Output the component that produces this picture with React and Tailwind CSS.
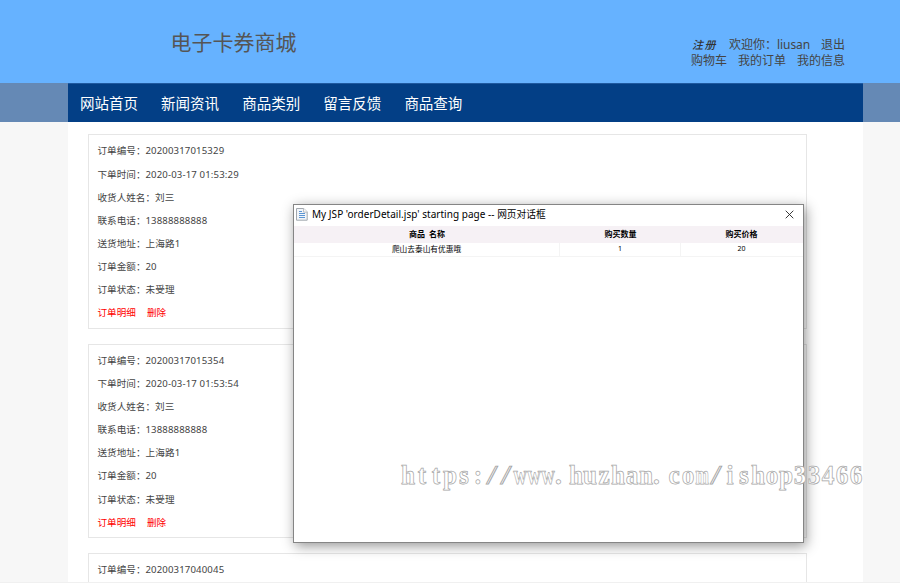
import React from "react";

const NAV = ["网站首页", "新闻资讯", "商品类别", "留言反馈", "商品查询"];

const ORDERS = [
  { id: "20200317015329", time: "2020-03-17 01:53:29" },
  { id: "20200317015354", time: "2020-03-17 01:53:54" },
];

function Row({ label, children }) {
  return (
    <div className="h-[23.15px] whitespace-nowrap leading-[23.15px]">
      {label}：<span className="tracking-[0.14px]">{children}</span>
    </div>
  );
}

function Order({ order }) {
  return (
    <section className="mb-[15px] h-[194.4px] w-[719px] shrink-0 border border-[#e6e6e6] pl-[8.5px] pt-[4px] text-[9.6px] text-[#444]">
      <Row label="订单编号">{order.id}</Row>
      <Row label="下单时间">{order.time}</Row>
      <Row label="收货人姓名">刘三</Row>
      <Row label="联系电话">13888888888</Row>
      <Row label="送货地址">上海路1</Row>
      <Row label="订单金额">20</Row>
      <Row label="订单状态">未受理</Row>
      <div className="flex h-[23.15px] gap-[11px] leading-[23.15px] text-[#ff0000]">
        <a>订单明细</a>
        <a>删除</a>
      </div>
    </section>
  );
}

function Dialog() {
  return (
    <div className="absolute left-[293px] top-[204px] h-[339px] w-[510.5px] border border-[#858585] bg-white text-black shadow-[2px_3px_12px_rgba(0,0,0,0.42)]">
      <div className="flex h-[20.5px] items-center pb-[2px] pl-[2px] pr-[9px]">
        <svg width="12" height="14" viewBox="0 0 12 14" className="shrink-0">
          <path d="M.5 1.5h7.3l3.4 3.4v8.3H.5z" fill="#f1f5fa" stroke="#a3a8ae" />
          <path d="M7.6 1.5v3.6h3.6" fill="#fff" stroke="#b5b9be" />
          <path d="M3 4.5h3M3 6.5h6M3 8.5h6M3 10.5h6" stroke="#5b95d2" />
        </svg>
        <span className="ml-1 whitespace-nowrap text-[10px] leading-[18px] tracking-[0.03px]">
          My JSP 'orderDetail.jsp' starting page -- <span className="text-[9.7px] tracking-normal">网页对话框</span>
        </span>
        <svg width="9" height="9" viewBox="0 0 9 9" className="ml-auto shrink-0">
          <path d="M.7.7l7.6 7.6M8.3.7L.7 8.3" stroke="#222" strokeWidth="0.9" />
        </svg>
      </div>
      <div className="grid h-[17.5px] grid-cols-[266px_121px_121px] items-center bg-[#f6f1f5] text-center text-[8px] font-bold leading-[15px]">
        <div className="pb-[2px]">商品&nbsp; 名称</div>
        <div className="pb-[2px]">购买数量</div>
        <div className="pb-[2px]">购买价格</div>
      </div>
      <div className="grid h-[14px] grid-cols-[266px_121px_121px] border-b border-[#f4f4f4] text-center text-[7.7px] leading-[12px]">
        <div className="border-r border-[#f4f4f4]">爬山去泰山有优惠哦</div>
        <div className="border-r border-[#f4f4f4] text-[7px]">1</div>
        <div className="text-[7px]">20</div>
      </div>
    </div>
  );
}

function glyphShape(c) {
  if (c === "w") return " justify-center scale-x-[0.68]";
  if (c === "m") return " justify-center scale-x-[0.6]";
  if (c === "/") return " justify-center scale-x-[1.5] font-normal";
  if (c === ".") return " justify-start";
  return " justify-center scale-x-[0.92]";
}

function Watermark() {
  return (
    <div className="absolute left-[401px] top-[459px] flex h-[32px] font-['Liberation_Serif',serif] text-[27.5px] font-bold leading-[32px] text-white [-webkit-text-stroke:0.75px_#a6a6a6]">
      {"https://www.huzhan.com/ishop33466".split("").map((c, i) => (
        <span key={i} className={"flex w-[14px] shrink-0" + glyphShape(c)}>
          {c}
        </span>
      ))}
    </div>
  );
}

export default function App() {
  return (
    <div className="relative h-[585px] w-[900px] overflow-hidden bg-white font-['Noto_Sans','Noto_Sans_CJK_SC',sans-serif] text-[#444]">
      <div className="flex h-[583px] flex-col overflow-hidden border-b border-[#f0f0f0] bg-[#f7f7f7]">
        <header className="flex h-[83px] shrink-0 justify-between bg-[#66b2ff] pl-[170.5px] pr-[55px]">
          <h1 className="mt-[26px] text-[21px] leading-[32px] text-[#555]">电子卡券商城</h1>
          <div className="mt-[37px] text-[12px] leading-[15.5px]">
            <div className="flex justify-end whitespace-nowrap">
              <a className="mr-[12px] text-[11px] font-medium italic tracking-[1.5px] text-[#333]">注册</a>
              <span className="mr-[11px]">欢迎你：<span className="tracking-[-0.1px]">liusan</span></span>
              <a>退出</a>
            </div>
            <div className="flex justify-end gap-[11px] whitespace-nowrap">
              <a>购物车</a>
              <a>我的订单</a>
              <a>我的信息</a>
            </div>
          </div>
        </header>
        <div className="h-[39px] shrink-0 bg-[#6589b5] pl-[68px]">
          <nav className="flex h-[39px] w-[795px] gap-[23.1px] border-t border-[#1f59a0] bg-[#033f86] pl-[12px] text-[14.5px] leading-[39px] text-white">
            {NAV.map((n) => (
              <a key={n} className="w-[58px] whitespace-nowrap">{n}</a>
            ))}
          </nav>
        </div>
        <main className="ml-[68px] flex min-h-0 w-[795px] flex-1 flex-col bg-white pl-[20px] pt-[12.4px]">
          {ORDERS.map((o) => (
            <Order key={o.id} order={o} />
          ))}
          <section className="w-[719px] flex-1 border border-b-0 border-[#e6e6e6] pl-[8.5px] pt-[4px] text-[9.6px] text-[#444]">
            <Row label="订单编号">20200317040045</Row>
          </section>
        </main>
      </div>
      <Dialog />
      <Watermark />
    </div>
  );
}
